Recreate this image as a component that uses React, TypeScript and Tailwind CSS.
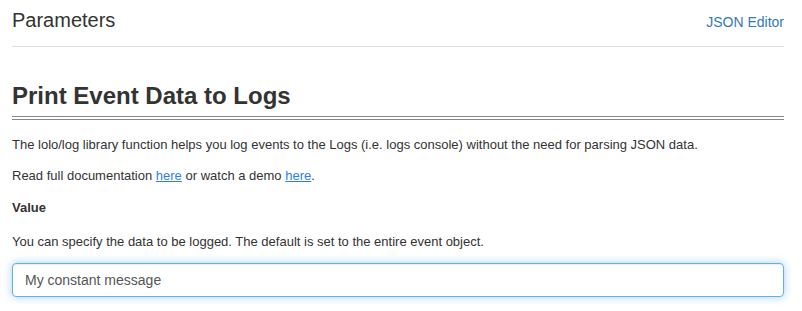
import React from "react"

export default function App() {
  const [value, setValue] = React.useState("My constant message")

  return (
    <div className="min-h-[311px] w-full bg-white pl-3 pr-[18px] font-['Liberation_Sans',Arial,sans-serif] text-[#333]">
      {/* Header */}
      <div className="flex items-baseline justify-between border-b border-[#dddddd] pt-[6px] pb-3">
        <h3 className="text-[20px] leading-[28px] font-normal">Parameters</h3>
        <a href="#" className="text-[14px] leading-5 text-[#337ab7]">
          JSON Editor
        </a>
      </div>

      {/* Title */}
      <h2 className="mt-[33px] border-b-4 border-double border-[#888888] pb-1 text-[24px] leading-8 font-bold">
        Print Event Data to Logs
      </h2>

      <p className="mt-4 text-[13px] leading-[18px]">
        The lolo/log library function helps you log events to the Logs (i.e. logs console) without the need for parsing JSON data.
      </p>
      <p className="mt-[13px] text-[13px] leading-[18px]">
        Read full documentation{" "}
        <a href="#" className="text-[#2f7ee6] underline">
          here
        </a>{" "}
        or watch a demo{" "}
        <a href="#" className="text-[#2f7ee6] underline">
          here
        </a>
        .
      </p>

      {/* Value field */}
      <div className="mt-[14px] text-[13px] leading-[18px] font-bold">Value</div>
      <p className="mt-4 text-[13px] leading-[18px]">
        You can specify the data to be logged. The default is set to the entire event object.
      </p>
      <input
        type="text"
        value={value}
        onChange={(e) => setValue(e.target.value)}
        className="mt-3 block h-[34px] w-full rounded border border-[#66afe9] px-3 text-[14px] text-[#555] shadow-[inset_0_1px_1px_rgba(0,0,0,0.075),0_0_8px_rgba(102,175,233,0.6)] outline-none"
      />
    </div>
  )
}
